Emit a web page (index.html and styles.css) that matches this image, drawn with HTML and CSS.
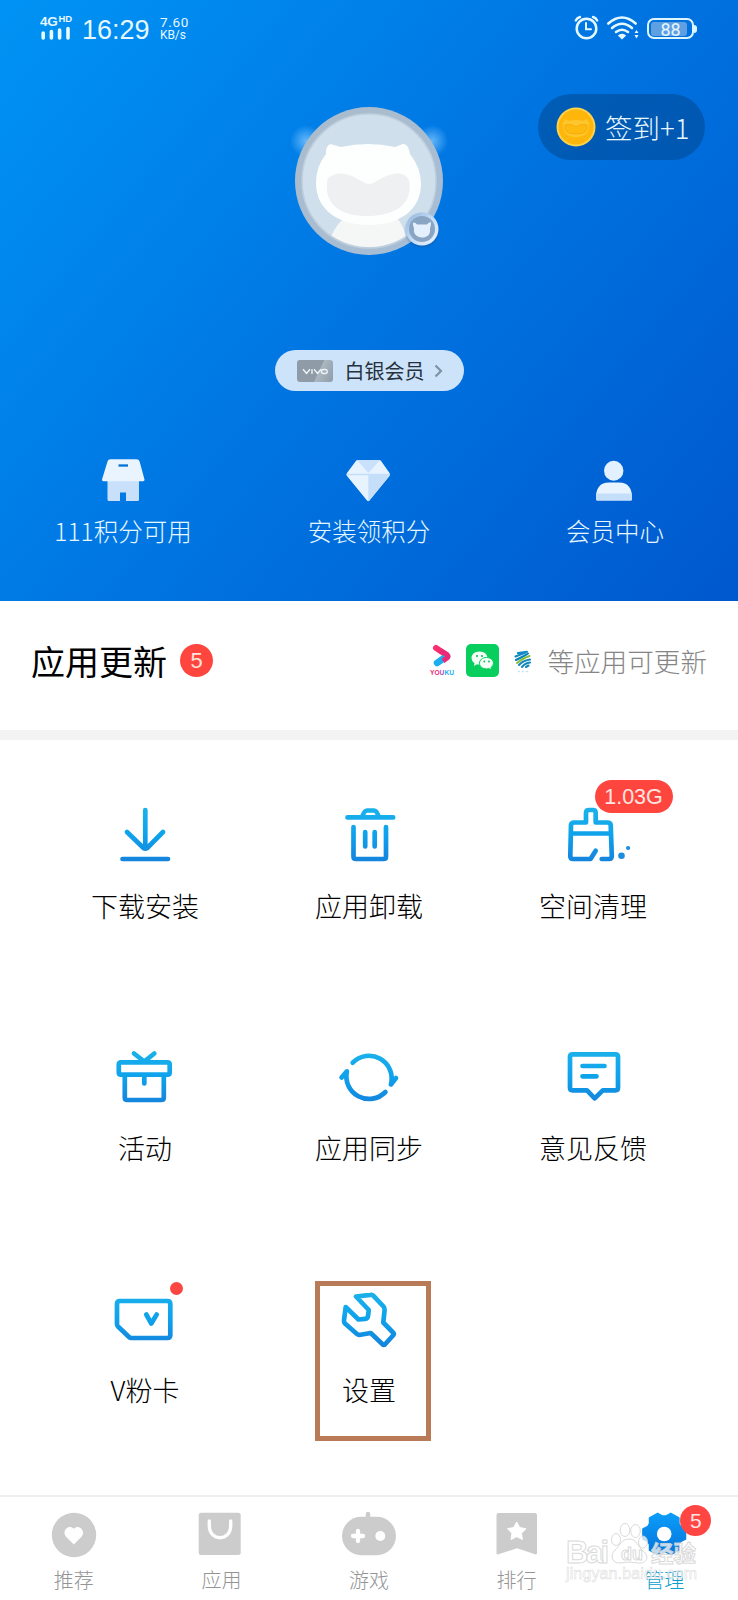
FILE: index.html
```html
<!DOCTYPE html>
<html lang="zh-CN">
<head>
<meta charset="utf-8">
<meta name="viewport" content="width=device-width, initial-scale=1">
<title>管理</title>
<link rel="stylesheet" href="styles.css">
</head>
<body>
<svg class="defs" width="0" height="0" aria-hidden="true">
  <defs>
    <linearGradient id="line" gradientUnits="userSpaceOnUse" x1="0" y1="8" x2="0" y2="62">
      <stop offset="0" stop-color="#1bb2ea"/><stop offset=".5" stop-color="#0ea2ec"/><stop offset="1" stop-color="#1583dc"/>
    </linearGradient>
    <linearGradient id="gear" x1="0" y1="0" x2="0" y2="1">
      <stop offset="0" stop-color="#0c9df8"/><stop offset="1" stop-color="#0574dc"/>
    </linearGradient>
    <linearGradient id="rim" x1="0" y1="0" x2="1" y2="1">
      <stop offset="0" stop-color="#a9bccd"/><stop offset=".5" stop-color="#aabdd0"/><stop offset="1" stop-color="#a4bdd8"/>
    </linearGradient>
    <linearGradient id="silver" x1="0" y1="0" x2="1" y2="1">
      <stop offset="0" stop-color="#8fb4dc"/><stop offset=".5" stop-color="#c4dcf6"/><stop offset="1" stop-color="#edf5ff"/>
    </linearGradient>
    <radialGradient id="glow"><stop offset="0" stop-color="#7cc5ff" stop-opacity=".8"/><stop offset="1" stop-color="#7cc5ff" stop-opacity="0"/></radialGradient>
    <clipPath id="face"><circle cx="74" cy="74" r="66"/></clipPath>
  </defs>
</svg>

<div class="screen">
  <header class="hero">
    <div class="status">
      <div class="network">
        <div class="net-type">4G<span class="hd">HD</span></div>
        <svg width="30" height="13" viewBox="0 0 30 13"><path d="M3.2 6v5M11.4 4.5V11M19.6 3v8M28 1.5V11" stroke="#e9fbff" stroke-width="3.6" stroke-linecap="round"/></svg>
      </div>
      <div class="clock">16:29</div>
      <div class="speed"><span>7.60</span><span class="unit">KB/s</span></div>
      <div class="status-icons">
        <svg width="25" height="26" viewBox="0 0 25 26" fill="none" stroke="#e5f8ff" stroke-linecap="round"><circle cx="12.5" cy="13.5" r="9.8" stroke-width="2.5"/><path d="M12 8v6.3h5" stroke-width="2"/><path d="M1.8 5.5Q3 2.8 6 2M23.2 5.5Q22 2.8 19 2" stroke-width="2.4"/></svg>
        <svg width="33" height="26" viewBox="0 0 33 26" fill="none" stroke="#e5f8ff" stroke-linecap="round" stroke-width="2.6"><path d="M2.3 8.5Q16-3.5 29.7 8.5"/><path d="M6 13Q16 4.5 26 13"/><path d="M10 17Q16 12.5 22 17"/><path d="M13 20.5q3-2 6 0l-3 3z" fill="#e5f8ff" stroke-width="1.5"/><path d="M28.5 18l2-3 2 3zM28.5 20l2 3.4 2-3.4z" fill="#e5f8ff" stroke="none"/></svg>
        <div class="battery"><span class="battery-level">88</span></div>
      </div>
    </div>

    <div class="profile">
      <div class="avatar">
        <svg class="avatar-art" width="148" height="148" viewBox="0 0 148 148">
          <circle cx="11" cy="34" r="16" fill="url(#glow)"/><circle cx="137" cy="34" r="16" fill="url(#glow)"/>
          <circle cx="74" cy="74" r="74" fill="url(#rim)"/>
          <circle cx="74" cy="74" r="67" fill="#d0dfec" stroke="#bfcfdd" stroke-width="1.5"/>
          <g clip-path="url(#face)">
            <path d="M35 132Q43 112 58 106H95Q107 112 111 130L107 150H35z" fill="#f5f7f7"/>
            <path d="M31 43Q33 35 39 38L46 40Q73 34 100 40L108 37Q113 36 115 47Q126 61 126 77C126 104 103 118 74 118S21 104 21 76Q21 59 31 47z" fill="#fdfefe"/>
            <path d="M33 71Q43 63 57 69L70 76Q74 78 78 76L91 69Q108 62 114 73C118 94 105 108 74 109S27 94 33 71z" fill="#eff0f1"/>
          </g>
        </svg>
        <svg class="rank" width="34" height="36" viewBox="0 0 34 36">
          <circle cx="17" cy="17" r="16.5" fill="url(#silver)"/><circle cx="17" cy="17" r="13" fill="#8aa4c3"/>
          <path d="M8 10.5q3 0 4 2h10q1-2 4-2.500q0 4-1 6C26 23 22 25.500 17 25.500S8 22 9 16.500Q7.500 13 8 10.500z" fill="#e4f0fd"/>
        </svg>
      </div>
      <div class="checkin">
        <svg width="40" height="40" viewBox="0 0 40 40"><circle cx="20" cy="20" r="19.500" fill="#fed24a"/><circle cx="20" cy="20" r="17.500" fill="#ffb60a"/><path d="M9 12l4 2q7-2 14 0l4-2q3 5 2 9c-1 7-7 9-13 9S8 28 7 21q-1-5 2-9z" fill="#fec62d"/><path d="M9 18q6-2 11 2 5-4 11-2 2 9-11 9T9 18z" fill="#ffba12" stroke="#f5a400" stroke-width=".7"/></svg>
        <span>签到+1</span>
      </div>
    </div>

    <div class="member">
      <span class="chip"><svg width="26" height="8" viewBox="0 0 26 8" fill="none" stroke="#eef3f7" stroke-width="1.400"><path d="M1 2.200L4.500 6.500 8 2.200M10 2.200V7M12 2.200l3.500 4.300L19 2.200"/><rect x="19.500" y="2.500" width="5.700" height="4" rx="2"/></svg></span>
      <span class="member-name">白银会员</span>
      <svg width="9" height="14" viewBox="0 0 9 14" fill="none" stroke="#7f92a5" stroke-width="2.200"><path d="M1.500 1.500L7 7l-5.500 5.500"/></svg>
    </div>

    <div class="stats">
      <div class="stat">
        <svg width="50" height="50" viewBox="0 0 50 50"><path d="M9.500 25H41V43.500Q41 45 39.500 45H28V36.500H22V45H11Q9.500 45 9.500 43.500z" fill="#c9e0fb"/><path d="M12.500 3.300H38.500Q41 3.300 41.600 5.500L46.500 23.500Q46.800 25.300 45 25.300H5.500Q3.700 25.300 4 23.500L9.500 5.500Q10 3.300 12.500 3.300z" fill="#eaf4fe"/><path d="M20.500 9.500H30" stroke="#0671d0" stroke-width="2.300"/></svg>
        <span>111积分可用</span>
      </div>
      <div class="stat">
        <svg width="50" height="50" viewBox="0 0 50 50"><path d="M14 4H35Q36.500 4 37.300 5.300L45.500 17Q46.300 18.500 45.500 20L25.500 44.500Q24.300 45.700 23 44.500L3 20Q2 18.500 3 17L11.700 5.300Q12.500 4 14 4z" fill="#e7f3ff"/><path d="M13 4H36L24.500 17z" fill="#cae1fb"/><path d="M24.300 18.500H46L24.300 45.500z" fill="#c5defa"/><path d="M2.500 18.500H46" stroke="#c5defa" stroke-width="1.300"/></svg>
        <span>安装领积分</span>
      </div>
      <div class="stat">
        <svg width="50" height="50" viewBox="0 0 50 50"><ellipse cx="23.700" cy="14.700" rx="9.700" ry="10" fill="#e2f0ff"/><path d="M6 43Q5.500 26.500 19 26.500H29Q42.500 26.500 42 43 42 44.500 40.500 44.500H7.500Q6 44.500 6 43z" fill="#e8f4ff"/><path d="M6 37.500H42V43Q42 44.500 40.500 44.500H7.500Q6 44.500 6 43z" fill="#c5dffa"/></svg>
        <span>会员中心</span>
      </div>
    </div>
  </header>

  <section class="updates">
    <h1>应用更新</h1>
    <span class="count">5</span>
    <div class="update-apps">
      <svg width="26" height="30" viewBox="0 0 26 30"><path d="M7 2L17 8.500" stroke="#fa2f70" stroke-width="6" stroke-linecap="round"/><path d="M18 10L8 17" stroke="#19aef0" stroke-width="6.500" stroke-linecap="round"/><path d="M11 4.500L18 8.700Q20 10.500 18 12L14 15" stroke="#ec2a78" stroke-width="5" fill="none"/><text x="1" y="28.500" textLength="24" lengthAdjust="spacingAndGlyphs" class="youku"><tspan fill="#f02b72">YO</tspan><tspan fill="#a84bb0">U</tspan><tspan fill="#20aef0">KU</tspan></text></svg>
      <svg class="wechat" width="33" height="33" viewBox="0 0 33 33"><rect width="33" height="33" rx="5" fill="#07ce5c"/><path d="M13.500 7.500C9 7.500 5.500 10.300 5.500 14q0 3.300 3 5.200L8 22l3-1.800q1.200.3 2.500.3C18 20.500 21.500 17.700 21.500 14S18 7.500 13.500 7.500z" fill="#f4fff8"/><path d="M20.500 13.500c-4 0-7 2.500-7 5.700s3 5.700 7 5.700q1.200 0 2.300-.3L25.500 26l-.6-2.500q2.600-1.600 2.600-4.300c0-3.200-3-5.700-7-5.700z" fill="#f4fff8" stroke="#07ce5c"/><g fill="#07b953"><circle cx="11" cy="12" r="1"/><circle cx="16" cy="12" r="1"/><circle cx="18.300" cy="17.500" r=".9"/><circle cx="23" cy="17.500" r=".9"/></g></svg>
      <svg class="mobile" width="18" height="24" viewBox="0 0 18 24" fill="none" stroke-width="2.100" stroke-linecap="round"><path d="M4 3L13 1.800M1.500 6.500L11.500 2.500" stroke="#128ac4"/><path d="M2 10L8 7Q11 5.500 14 3.500" stroke="#0782bb"/><path d="M3 13L8 9.500Q12 7 15.500 6" stroke="#8dbc3c"/><path d="M5 15Q8 11 16 9.500M8 17Q11 13 16 12.500M12 17L14.500 15.500" stroke="#1489bb"/><path d="M4.500 21.500h1M8.500 21.500h1M12.500 21.500h1" stroke="#c8e4f0" stroke-width="1.500"/></svg>
      <span class="updates-note">等应用可更新</span>
    </div>
  </section>

  <main class="tools">
    <div class="tool">
      <div class="icon"><svg viewBox="0 0 70 70"><path d="M35.300 10V48.500M17 32L33.500 48Q35.300 49.300 37.200 48L53 32M12.500 59H58"/></svg></div>
      <span>下载安装</span>
    </div>
    <div class="tool">
      <div class="icon"><svg viewBox="0 0 70 70"><path d="M13.500 17.400H59.200M28.500 16Q30.500 10.500 33 10.500H40Q42.500 10.500 44.500 16M19.500 27V56.500Q19.500 59 22 59H49.500Q52 59 52 56.500V27M31.200 32V46.500M40.700 32V46.500"/></svg></div>
      <span>应用卸载</span>
    </div>
    <div class="tool">
      <div class="icon"><svg viewBox="0 0 70 70"><path d="M28 22.500V13Q28 10 31 10H35Q37.700 10 37.700 13V22.500H49.500Q52.500 22.500 52.700 25L53.800 56Q53.800 59 51 59H43.700M28 22.500H16Q13.300 22.500 13 25L12.300 56Q12.300 59 15 59H32.500L37.700 50.700M13 33.500H52.500"/><path class="dots" d="M60.200 55.700a3.300 3.300 0 1 0 6.600 0a3.300 3.300 0 1 0-6.600 0M68 48a2.100 2.100 0 1 0 4.200 0a2.100 2.100 0 1 0-4.200 0"/></svg><b class="size">1.03G</b></div>
      <span>空间清理</span>
    </div>
    <div class="tool">
      <div class="icon"><svg viewBox="0 0 70 70"><path d="M24 11.500L34.300 19.500 44.300 11.500M11 20.300H57.500Q59.700 20.300 59.700 22.500V30.500Q59.700 32.700 57.500 32.700H11Q8.800 32.700 8.800 30.500V22.500Q8.800 20.300 11 20.300zM14.800 32.700V55.500Q14.800 58 17.300 58H51.300Q53.800 58 53.800 55.500V32.700M34.300 32.700V41.500"/></svg></div>
      <span>活动</span>
    </div>
    <div class="tool">
      <div class="icon"><svg viewBox="0 0 70 70"><path d="M18.700 20.700A22.700 22.700 0 0 1 56.900 42.500L62 36M51.400 50A22.700 22.700 0 0 1 12.900 29.300L7.600 35.500"/></svg></div>
      <span>应用同步</span>
    </div>
    <div class="tool">
      <div class="icon"><svg viewBox="0 0 70 70"><path d="M14.500 12.300H57.500Q60 12.300 60 14.800V45.800Q60 48.300 57.500 48.300H44.800L36.700 56.300 29 48.300H14.500Q12 48.300 12 45.800V14.800Q12 12.300 14.500 12.300zM24.500 24H46.500M24.500 34.300H38.500"/></svg></div>
      <span>意见反馈</span>
    </div>
    <div class="tool">
      <div class="icon"><svg viewBox="0 0 70 70"><path d="M10 17H57.300Q60.300 17 60.300 20V51Q60.300 54 57.300 54H21.500Q20 54 19 53L8 42.500Q7 41.500 7 40V20Q7 17 10 17zM36.300 30.500L41.300 39.500 46.700 30.500"/></svg><i class="dot"></i></div>
      <span>V粉卡</span>
    </div>
    <div class="tool highlighted">
      <div class="icon"><svg viewBox="0 0 70 70"><path d="M22 12.500L36.500 10.800Q38.300 10.500 39.500 11.800L49.500 22.500Q50.800 24 50.600 26L49.300 38.500 59 48.500Q60.500 50 59 51.500L51.300 60Q49.800 61.500 48.300 60L36.700 49 26.500 50.800Q24.300 51.200 22.700 49.700L11 39.500Q9.800 38.300 10 36.500L11.700 23 24.500 35.500 31 34.900Q33.700 34.700 34 32L34.800 26z"/></svg></div>
      <span>设置</span>
    </div>
  </main>

  <nav class="tabs">
    <div class="tab">
      <svg width="50" height="50" viewBox="0 0 50 50"><circle cx="25" cy="25" r="22.200"/><path d="M24.800 34.500L16.800 26.500C12.500 21 19.500 13.500 24.800 18.700C30 13.500 37 21 32.800 26.500z" class="cut"/></svg>
      <span>推荐</span>
    </div>
    <div class="tab">
      <svg width="50" height="50" viewBox="0 0 50 50"><rect x="2.700" y="2.700" width="42" height="42.300" rx="2.500"/><path d="M13.300 11V15.500C13.300 31.800 34.700 31.800 34.700 15.500V11" class="cutline"/></svg>
      <span>应用</span>
    </div>
    <div class="tab">
      <svg width="50" height="50" viewBox="0 0 50 50"><rect x="-2" y="6.800" width="54" height="38.400" rx="19.200"/><path d="M24 4V10" stroke="#ccc" stroke-width="4.500" stroke-linecap="round"/><path d="M9 26H19M14 21V31" class="cutline plus"/><circle cx="36.300" cy="26" r="5" class="cut"/></svg>
      <span>游戏</span>
    </div>
    <div class="tab">
      <svg width="50" height="50" viewBox="0 0 50 50"><path d="M6.500 3H43Q45 3 45 5V43Q45 45 43 44.200L25 38.300 6.500 44.200Q4.500 45 4.500 43V5Q4.500 3 6.500 3z"/><path d="M24.700 12l3 5.600 6.200 1.100-4.400 4.500.9 6.300-5.700-2.800-5.700 2.800.9-6.300-4.400-4.500 6.200-1.100z" class="cut" stroke="#fff" stroke-linejoin="round"/></svg>
      <span>排行</span>
    </div>
    <div class="tab active">
      <svg width="50" height="50" viewBox="0 0 50 50"><g transform="translate(25.200 24)"><path fill="url(#gear)" stroke="url(#gear)" stroke-width="1.500" stroke-linejoin="round" d="M16.300-7.600L21.300-5.100V5.100L16.300 7.600 14.700 10.300 14.700 16 6.600 20.700 1.600 17.900H-1.600L-6.600 20.700-14.700 16V10.300L-16.300 7.600-21.300 5.100V-5.100L-16.300-7.600-14.700-10.300V-16L-6.600-20.700-1.600-17.900H1.600L6.600-20.700 14.700-16V-10.300z"/><circle r="7.300" class="cut"/></g></svg>
      <span>管理</span>
      <b class="tab-count">5</b>
    </div>
    <svg class="watermark" width="140" height="70" viewBox="0 0 140 70" aria-hidden="true">
      <g fill="#fff" fill-opacity=".75" stroke="#d2d2d2" stroke-opacity=".85">
        <text x="1" y="50" class="wm-logo" textLength="43">Bai</text>
        <ellipse cx="51" cy="26.500" rx="4.500" ry="6"/><ellipse cx="60" cy="17" rx="4.800" ry="6.500"/><ellipse cx="70.500" cy="18" rx="4.800" ry="6.500"/><ellipse cx="78" cy="29" rx="4.500" ry="6"/>
        <path d="M64 26C56 26 55 33 50 37 44 43 48 51 55 50Q64 48 73 50C82 51 85 43 78 38 73 34 72 26 64 26z"/>
        <text x="56" y="46.500" class="wm-du">du</text>
        <text x="86" y="49" class="wm-cn" textLength="45">经验</text>
        <text x="1" y="66" class="wm-url" textLength="131">jingyan.baidu.com</text>
      </g>
    </svg>
  </nav>
</div>
</body>
</html>
```
FILE: styles.css
```css
* { box-sizing: border-box; }

body {
  margin: 0;
  font-family: "Noto Sans CJK SC", sans-serif;
  font-weight: 300;
  color: #000;
  background: #fff;
}

svg { display: block; overflow: visible; flex: none; }
.defs { position: absolute; }

.screen {
  width: 738px;
  height: 1600px;
  display: flex;
  flex-direction: column;
  overflow: hidden;
}

/* Blue header */
.hero {
  height: 601px;
  color: #e6f7ff;
  background: linear-gradient(130deg, #0093f4 0%, #0078e4 45%, #0058cd 100%);
}

.status {
  height: 94px;
  padding: 15px 41px 0 40px;
  display: flex;
  align-items: flex-start;
  font-family: Roboto, sans-serif;
}

.network { width: 42px; }
.net-type { font: 700 13.5px/13px "Liberation Sans", sans-serif; display: flex; align-items: flex-start; letter-spacing: -0.3px; }
.net-type .hd { font-size: 9.5px; line-height: 8px; letter-spacing: 0; margin-left: 1px; }
.network svg { margin-top: -1px; }
.clock { font: 400 27px/30px "Liberation Sans", sans-serif; width: 78px; }
.speed { display: flex; flex-direction: column; font: 400 13.5px/14px Roboto, sans-serif; letter-spacing: .7px; }
.speed .unit { font-size: 12px; line-height: 12px; letter-spacing: -.1px; }
.status-icons { margin-left: auto; display: flex; align-items: flex-start; gap: 7px; }

.battery {
  position: relative;
  width: 47px;
  height: 21px;
  margin: 3px 3px 0 1px;
  padding: 1.5px;
  border: 2px solid #dff6ff;
  border-radius: 7px;
}
.battery::after {
  content: "";
  position: absolute;
  right: -5px;
  top: 4.5px;
  width: 3px;
  height: 8px;
  border-radius: 0 3px 3px 0;
  background: #dff6ff;
}
.battery-level {
  display: block;
  width: 36px;
  height: 14px;
  padding-left: 4px;
  border-radius: 3px;
  background: rgba(190, 205, 230, .5);
  font: 400 18px/15px Roboto, sans-serif;
  text-align: center;
}

.profile {
  display: grid;
  grid-template-columns: 1fr auto 1fr;
  align-items: start;
}
.avatar { grid-column: 2; position: relative; margin-top: 13px; }
.rank { position: absolute; left: 110px; top: 105px; filter: drop-shadow(0 2px 1px rgba(40, 70, 120, .3)); }
.checkin {
  justify-self: end;
  margin-right: 33px;
  width: 167px;
  height: 66px;
  padding-left: 18px;
  display: flex;
  align-items: center;
  gap: 9px;
  border-radius: 33px;
  background: rgba(0, 68, 138, .5);
  font-size: 27.5px;
  line-height: 40px;
  white-space: nowrap;
}

.member {
  width: 189px;
  height: 41px;
  margin: 95px auto 0;
  padding-left: 22px;
  display: flex;
  align-items: center;
  border-radius: 21px;
  background: #cde3fa;
}
.chip {
  width: 36px;
  height: 22px;
  margin-right: 12px;
  display: grid;
  place-items: center;
  border-radius: 3px;
  background: linear-gradient(115deg, #8f9ba6 0 58%, #abb7c1 60%, #8f9ba6 100%);
}
.member-name { width: 89px; font-size: 20px; line-height: 30px; color: #26323d; font-weight: 400; }

.stats { display: grid; grid-template-columns: repeat(3, 1fr); margin-top: 65px; }
.stat { display: flex; flex-direction: column; align-items: center; font-size: 24.5px; line-height: 36px; }
.stat span { margin-top: 7px; }

/* Pending updates */
.updates {
  height: 139px;
  padding: 0 31px 10px 31px;
  display: flex;
  align-items: center;
  border-bottom: 10px solid #f3f3f3;
}
.updates h1 { margin: 0 13px 0 0; font-size: 34px; line-height: 48px; font-weight: 400; }
.count {
  width: 33px;
  height: 33px;
  border-radius: 50%;
  background: #ff463e;
  color: #ffe2dd;
  font: 400 22px/33px "Liberation Sans", sans-serif;
  text-align: center;
}
.update-apps { margin-left: auto; display: flex; align-items: center; }
.youku { font: 900 7.5px "Liberation Sans", sans-serif; }
.wechat { margin-left: 11px; }
.mobile { margin: 2px 0 0 15px; }
.updates-note { margin-left: 15px; font-size: 26.6px; line-height: 40px; color: #858585; }

/* Tool grid */
.tools {
  flex: 1;
  padding: 0 33px;
  display: grid;
  grid-template-columns: repeat(3, 224px);
  grid-auto-rows: 242px;
}
.tool { padding-top: 60px; display: flex; flex-direction: column; align-items: center; position: relative; }
.tool > span { margin-top: 16px; font-size: 27px; line-height: 40px; }
.icon { position: relative; width: 70px; height: 70px; }
.icon svg { width: 70px; height: 70px; }
.icon path { fill: none; stroke: url(#line); stroke-width: 4.7; stroke-linecap: round; stroke-linejoin: round; }
.icon .dots { fill: #1b8ddd; stroke: none; }
.size {
  position: absolute;
  left: 36.5px;
  top: -20px;
  width: 78px;
  height: 33px;
  border-radius: 17px;
  background: #ff463e;
  color: #ffe5e1;
  font: 400 21.5px/34px "Liberation Sans", sans-serif;
  text-align: center;
}
.dot { position: absolute; left: 59.5px; top: -2px; width: 13px; height: 13px; border-radius: 50%; background: #fb4642; }
.highlighted::before {
  content: "";
  position: absolute;
  left: 58px;
  top: 57px;
  width: 106px;
  height: 150px;
  border: 5.5px solid #b97a58;
}

/* Bottom tabs */
.tabs {
  position: relative;
  height: 105px;
  padding-top: 13px;
  display: grid;
  grid-template-columns: repeat(5, 1fr);
  border-top: 2px solid #eee;
}
.tab { position: relative; display: flex; flex-direction: column; align-items: center; font-size: 20px; line-height: 30px; color: #949494; }
.tab svg { fill: #ccc; }
.tab span { margin-top: 5px; }
.tab .cut { fill: #fff; }
.tab .cutline { fill: none; stroke: #fff; stroke-width: 3.4; stroke-linecap: round; }
.tab .plus { stroke-width: 4.3; }
.active { color: #0a9fd0; }
.tab-count {
  position: absolute;
  left: 90px;
  top: -5px;
  width: 31px;
  height: 31px;
  border-radius: 50%;
  background: #ff4642;
  color: #ffe5e1;
  font: 400 21px/31px "Liberation Sans", sans-serif;
  text-align: center;
}

.watermark { position: absolute; left: 565px; top: 16px; }
.wm-logo { font: 700 31px "Liberation Sans", sans-serif; }
.wm-du { font: 700 18px "Liberation Sans", sans-serif; }
.wm-cn { font: 700 22.500px "Noto Sans CJK SC", sans-serif; }
.wm-url { font: 400 16px "Liberation Sans", sans-serif; stroke-width: .5px; }
```
